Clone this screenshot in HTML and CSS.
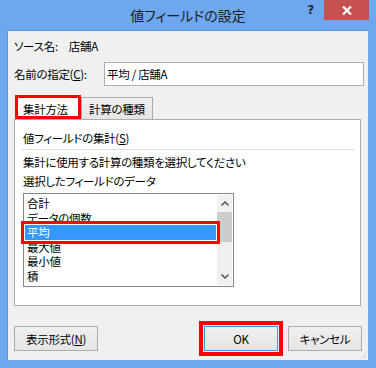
FILE: index.html
```html
<!DOCTYPE html>
<html lang="ja">
<head>
    <meta charset="UTF-8">
    <title>値フィールドの設定</title>
    <link rel="stylesheet" href="styles.css">
</head>
<body>

    <div class="window">
        <div class="titlebar">
            <span></span>
            <span class="title">値フィールドの設定</span>
            <div class="controls">
                <span class="help">?</span>
                <span class="close">
                    <svg width="10" height="9" viewBox="0 0 10 9"><path d="M1 0.5 L9 8.5 M9 0.5 L1 8.5" stroke="#fff" stroke-width="2.2"/></svg>
                </span>
            </div>
        </div>

        <div class="client">
            <div class="source">ソース名:<span class="source-name">店舗A</span></div>

            <div class="name-row">
                <label for="fieldName">名前の指定(<u>C</u>):</label>
                <input type="text" id="fieldName" value="平均 / 店舗A">
            </div>

            <div class="tabs">
                <div class="tab active">集計方法</div>
                <div class="tab">計算の種類</div>
            </div>

            <div class="panel">
                <div class="group-title">値フィールドの集計(<u>S</u>)</div>
                <div class="sep"></div>
                <p>集計に使用する計算の種類を選択してください</p>
                <p>選択したフィールドのデータ</p>

                <div class="listbox">
                    <ul class="items">
                        <li>合計</li>
                        <li>データの個数</li>
                        <li class="selected">平均</li>
                        <li>最大値</li>
                        <li>最小値</li>
                        <li>積</li>
                    </ul>
                    <div class="scrollbar">
                        <span class="arrow">
                            <svg width="8" height="5" viewBox="0 0 8 5"><path d="M0.5 4.5 L4 1 L7.5 4.5" fill="none" stroke="#606060" stroke-width="1.6"/></svg>
                        </span>
                        <span class="thumb"></span>
                        <span class="track"></span>
                        <span class="arrow">
                            <svg width="8" height="5" viewBox="0 0 8 5"><path d="M0.5 0.5 L4 4 L7.5 0.5" fill="none" stroke="#606060" stroke-width="1.6"/></svg>
                        </span>
                    </div>
                </div>
            </div>

            <div class="buttons">
                <button class="btn format-btn">表示形式(<u>N</u>)</button>
                <button class="btn default">OK</button>
                <button class="btn">キャンセル</button>
            </div>

            <svg class="grip" width="8" height="8" viewBox="0 0 8 8">
                <path d="M7 1 L1 7 M7 4 L4 7" stroke="#b8b8b8" stroke-width="1" stroke-dasharray="1 1"/>
            </svg>
        </div>
    </div>

</body>
</html>
```

FILE: styles.css
```css
body {
    margin: 0;
    font-family: "Noto Sans CJK JP", "Noto Sans", sans-serif;
    font-feature-settings: "palt";
    font-size: 11.5px;
    letter-spacing: -0.3px;
    color: #000;
}

.window {
    width: 376px;
    height: 368px;
    background: #6ca7f0;
    display: flex;
    flex-direction: column;
    box-sizing: border-box;
}

.titlebar {
    height: 30px;
    display: grid;
    grid-template-columns: 1fr auto 1fr;
    align-items: start;
}

.title {
    font-size: 14px;
    letter-spacing: 0;
    line-height: 30px;
    color: #1e1e1e;
}

.controls {
    display: flex;
    justify-content: flex-end;
    align-items: flex-start;
    padding-right: 7px;
}

.help {
    font-family: "DejaVu Sans", sans-serif;
    font-weight: bold;
    font-size: 12px;
    color: #2b2b2b;
    line-height: 20px;
    margin-right: 10px;
}

.close {
    width: 45px;
    height: 20px;
    background: #c75050;
    display: flex;
    align-items: center;
    justify-content: center;
}

.client {
    position: relative;
    margin-left: 7px;
    width: 361px;
    height: 330px;
    box-sizing: border-box;
    border: 1px solid #5b95de;
    border-right: none;
    border-bottom: none;
    background: #f0f0f0;
    padding: 7px 6px 0 6px;
}

.source {
    line-height: 16px;
}

.source-name {
    margin-left: 11px;
}

.name-row {
    display: flex;
    align-items: center;
    margin-top: 8px;
    height: 24px;
}

.name-row label {
    width: 90px;
}

.name-row input {
    flex: 1;
    height: 24px;
    box-sizing: border-box;
    border: 1px solid #abadb3;
    margin-right: -2px;
    padding: 0 2px;
    font: inherit;
    font-feature-settings: "palt";
    letter-spacing: -0.3px;
    outline: none;
}

.tabs {
    display: flex;
    align-items: flex-end;
    margin-top: 9px;
    padding-left: 1px;
    position: relative;
    z-index: 1;
}

.tab {
    height: 22px;
    box-sizing: border-box;
    padding: 3px 7px 0 7px;
    border: 1px solid #acacac;
    border-bottom: none;
    background: linear-gradient(#f0f0f0, #e5e5e5);
    line-height: 16px;
}

.tab.active {
    width: 66px;
    height: 24px;
    padding: 3px 0 0 5px;
    border: 3px solid #f00;
    background: #fff;
}

.panel {
    height: 187px;
    box-sizing: border-box;
    border: 1px solid #acacac;
    background: #fff;
    padding: 10px 6px 0 8px;
    margin-right: 1px;
}

.group-title {
    line-height: 16px;
}

.sep {
    height: 1px;
    background: #dcdcdc;
    margin: 3px 0 4px -1px;
}

.panel p {
    margin: 0 0 3px;
    line-height: 16px;
}

.listbox {
    display: flex;
    width: 211px;
    height: 94px;
    box-sizing: border-box;
    border: 1px solid #828790;
    margin-top: 4px;
    background: #fff;
}

.items {
    list-style: none;
    margin: 0;
    padding: 2px 1px 1px;
    flex: 1;
}

.items li {
    height: 14.5px;
    line-height: 14.5px;
    padding-left: 2px;
}

.items li.selected {
    background: #3399ff;
    color: #fff;
    outline: 3px solid #f00;
    outline-offset: 1px;
    position: relative;
    z-index: 1;
}

.scrollbar {
    width: 15px;
    margin: 1px 1px 1px 0;
    background: #f0f0f0;
    display: flex;
    flex-direction: column;
}

.arrow {
    height: 17px;
    display: flex;
    align-items: center;
    justify-content: center;
}

.thumb {
    height: 30px;
    background: #cdcdcd;
}

.track {
    flex: 1;
}

.buttons {
    display: flex;
    margin-top: 20px;
    gap: 10px;
}

.btn {
    width: 74px;
    height: 25px;
    box-sizing: border-box;
    border: 1px solid #acacac;
    background: linear-gradient(#f0f0f0, #e5e5e5);
    font: inherit;
    font-feature-settings: "palt";
    letter-spacing: -0.3px;
    color: #000;
    padding: 0;
}

.format-btn {
    width: 84px;
    margin-right: auto;
}

.btn.default {
    border-color: #3399ff;
    outline: 4px solid #f00;
    outline-offset: 1px;
}

.grip {
    position: absolute;
    right: 1px;
    bottom: 0;
}
```
